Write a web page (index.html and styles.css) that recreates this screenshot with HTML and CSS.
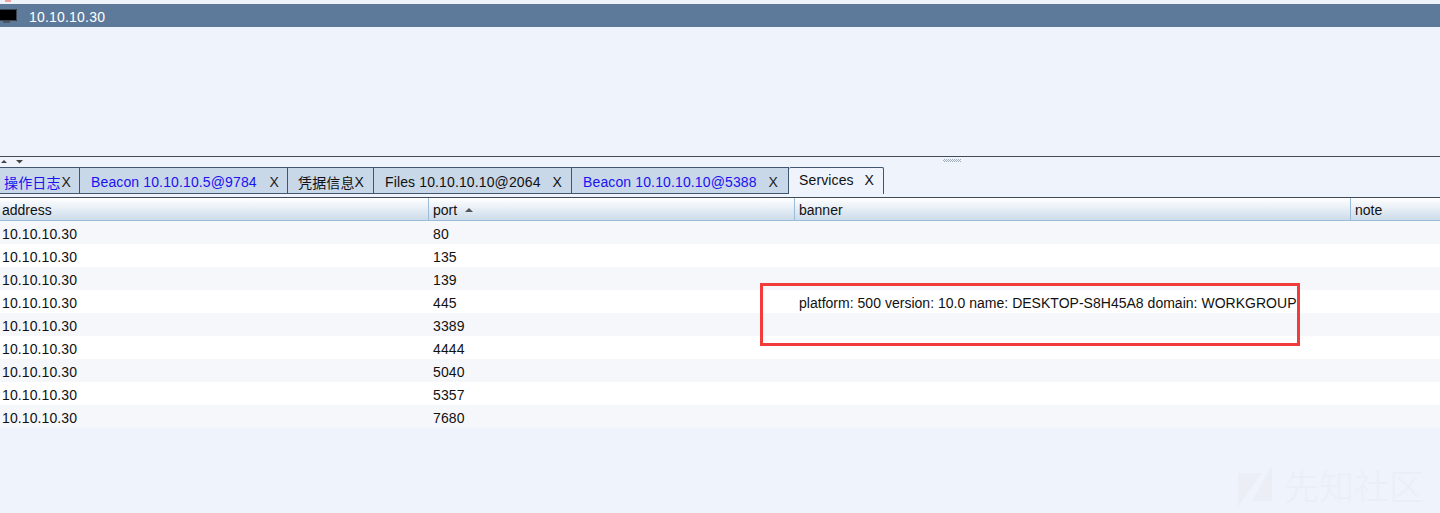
FILE: index.html
```html
<!DOCTYPE html>
<html lang="zh">
<head>
<meta charset="utf-8">
<title>Services</title>
<link rel="stylesheet" href="styles.css">
</head>
<body>
<div class="top-gap"><span class="red-mark"></span></div>
<div class="host-bar">
  <svg class="monitor" width="18" height="15" viewBox="0 0 18 15">
    <rect x="0" y="0" width="17" height="12" fill="#000"/>
    <path d="M0 .5H16.500V11.500H0" fill="none" stroke="#3c4650"/>
    <rect x="3" y="12" width="7" height="2" fill="#4a5560"/>
  </svg>
  <span class="host-name">10.10.10.30</span>
</div>
<div class="canvas"></div>
<div class="splitter">
  <svg class="arrows" width="24" height="6" viewBox="0 0 24 6">
    <path d="M1 5L4 2L7 5Z" fill="#444"/>
    <path d="M16 2H23L19.500 5.500Z" fill="#444"/>
  </svg>
  <span class="grip"></span>
</div>
<div class="tabs">
  <div class="tab blue t1"><span>操作日志</span><span class="x">X</span></div>
  <div class="tab blue t2"><span>Beacon 10.10.10.5@9784</span><span class="x">X</span></div>
  <div class="tab t3"><span>凭据信息</span><span class="x">X</span></div>
  <div class="tab t4"><span>Files 10.10.10.10@2064</span><span class="x">X</span></div>
  <div class="tab blue t5"><span>Beacon 10.10.10.10@5388</span><span class="x">X</span></div>
  <div class="tab active t6"><span>Services</span><span class="x">X</span></div>
</div>
<div class="table-wrap">
  <div class="row head">
    <div class="cell">address</div>
    <div class="cell">port<span class="sort"></span></div>
    <div class="cell">banner</div>
    <div class="cell">note</div>
  </div>
  <div class="row"><div class="cell">10.10.10.30</div><div class="cell">80</div><div class="cell"></div><div class="cell"></div></div>
  <div class="row"><div class="cell">10.10.10.30</div><div class="cell">135</div><div class="cell"></div><div class="cell"></div></div>
  <div class="row"><div class="cell">10.10.10.30</div><div class="cell">139</div><div class="cell"></div><div class="cell"></div></div>
  <div class="row"><div class="cell">10.10.10.30</div><div class="cell">445</div><div class="cell banner">platform: 500 version: 10.0 name: DESKTOP-S8H45A8 domain: WORKGROUP</div><div class="cell"></div></div>
  <div class="row"><div class="cell">10.10.10.30</div><div class="cell">3389</div><div class="cell"></div><div class="cell"></div></div>
  <div class="row"><div class="cell">10.10.10.30</div><div class="cell">4444</div><div class="cell"></div><div class="cell"></div></div>
  <div class="row"><div class="cell">10.10.10.30</div><div class="cell">5040</div><div class="cell"></div><div class="cell"></div></div>
  <div class="row"><div class="cell">10.10.10.30</div><div class="cell">5357</div><div class="cell"></div><div class="cell"></div></div>
  <div class="row"><div class="cell">10.10.10.30</div><div class="cell">7680</div><div class="cell"></div><div class="cell"></div></div>
</div>
<div class="callout"></div>
<div class="watermark">
  <svg class="wm-logo" width="36" height="42" viewBox="0 0 36 42">
    <path d="M0 8H24L0 42Z" fill="#ebeff5"/>
    <path d="M34 0V36H14Z" fill="#ebeff5"/>
  </svg>
  <span class="wm-text">先知社区</span>
</div>
</body>
</html>
```

FILE: styles.css
```css
* { box-sizing: border-box; }
html, body { margin: 0; height: 513px; overflow: hidden; }
body {
  position: relative;
  background: #eff3fb;
  font-family: "Liberation Sans", "Noto Sans CJK SC", sans-serif;
  font-size: 14px;
  color: #111;
}
.top-gap { height: 4px; position: relative; }
.red-mark { display: block; width: 6px; height: 2px; margin-left: 5px; background: #f0a0a0; }
.host-bar {
  height: 23px;
  background: #5d7a9a;
  display: flex;
  align-items: center;
  color: #fff;
}
.monitor { align-self: flex-start; margin-top: 5px; flex: none; margin-right: 11px; }
.host-name { margin-top: 3px; letter-spacing: 0.2px; }
.canvas { height: 129px; }
.splitter {
  height: 11px;
  border-top: 1px solid #444c57;
  display: flex;
  align-items: flex-start;
  position: relative;
}
.arrows { margin-top: 1px; }
.grip {
  position: absolute;
  left: 943px;
  top: 2px;
  width: 18px;
  height: 3px;
  background: repeating-conic-gradient(#a3adba 0 25%, transparent 0 50%) 0 0 / 2px 2px;
}
.tabs {
  height: 27px;
  display: flex;
  align-items: stretch;
  letter-spacing: 0.13px;
}
.tab {
  background: #c8d8e8;
  border-top: 1px solid #3f566e;
  border-right: 1px solid #3f566e;
  border-bottom: 1px solid #3f566e;
  display: flex;
  align-items: center;
  justify-content: space-between;
  padding-top: 3px;
  flex: none;
  white-space: nowrap;
}
.blue { color: #1a12f0; }
.blue .x { color: #222; }
.t1 { width: 80px; padding-left: 4px; padding-right: 8px; }
.t2 { width: 208px; padding-left: 11px; padding-right: 8px; }
.t3 { width: 86px; padding-left: 10px; padding-right: 9px; }
.t4 { width: 198px; padding-left: 11px; padding-right: 9px; }
.t5 { width: 217px; padding-left: 11px; padding-right: 10px; }
.t6 {
  width: 95px;
  padding: 0 9px 2px 10px;
  background: #eff3fb;
  border-bottom: 0;
  border-radius: 2px 2px 0 0;
}
.table-wrap { margin-top: 3px; border-top: 1px solid #3f4a56; }
.row {
  display: grid;
  grid-template-columns: 431px 366px 554px 89px;
  height: 23px;
  background: #f6f7fb;
}
.row:nth-child(odd) { background: #fff; }
.cell {
  padding: 2px 0 0 2px;
  line-height: 23px;
  white-space: nowrap;
  overflow: hidden;
  letter-spacing: 0.1px;
}
.banner { letter-spacing: 0.02px; }
.row.head {
  grid-template-columns: 428px 366px 556px 90px;
  background: linear-gradient(#ffffff, #ccdcea);
  border-bottom: 1px solid #9bbcd8;
}
.head .cell { padding: 0 0 0 2px; line-height: 24px; letter-spacing: 0; }
.head .cell + .cell { border-left: 1px solid #9bbcd8; padding-left: 4px; }
.sort {
  display: inline-block;
  margin-left: 8px;
  margin-bottom: 3px;
  vertical-align: middle;
  border-left: 4px solid transparent;
  border-right: 4px solid transparent;
  border-bottom: 4px solid #555;
}
.callout {
  position: absolute;
  left: 760px;
  top: 283px;
  width: 540px;
  height: 63px;
  border: 3px solid #f23c3c;
}
.watermark {
  position: absolute;
  left: 1238px;
  top: 465px;
  display: flex;
  align-items: flex-start;
  gap: 10px;
  color: #ebeff5;
  font-weight: 300;
}
.wm-text { font-size: 35px; line-height: 46px; }
```
